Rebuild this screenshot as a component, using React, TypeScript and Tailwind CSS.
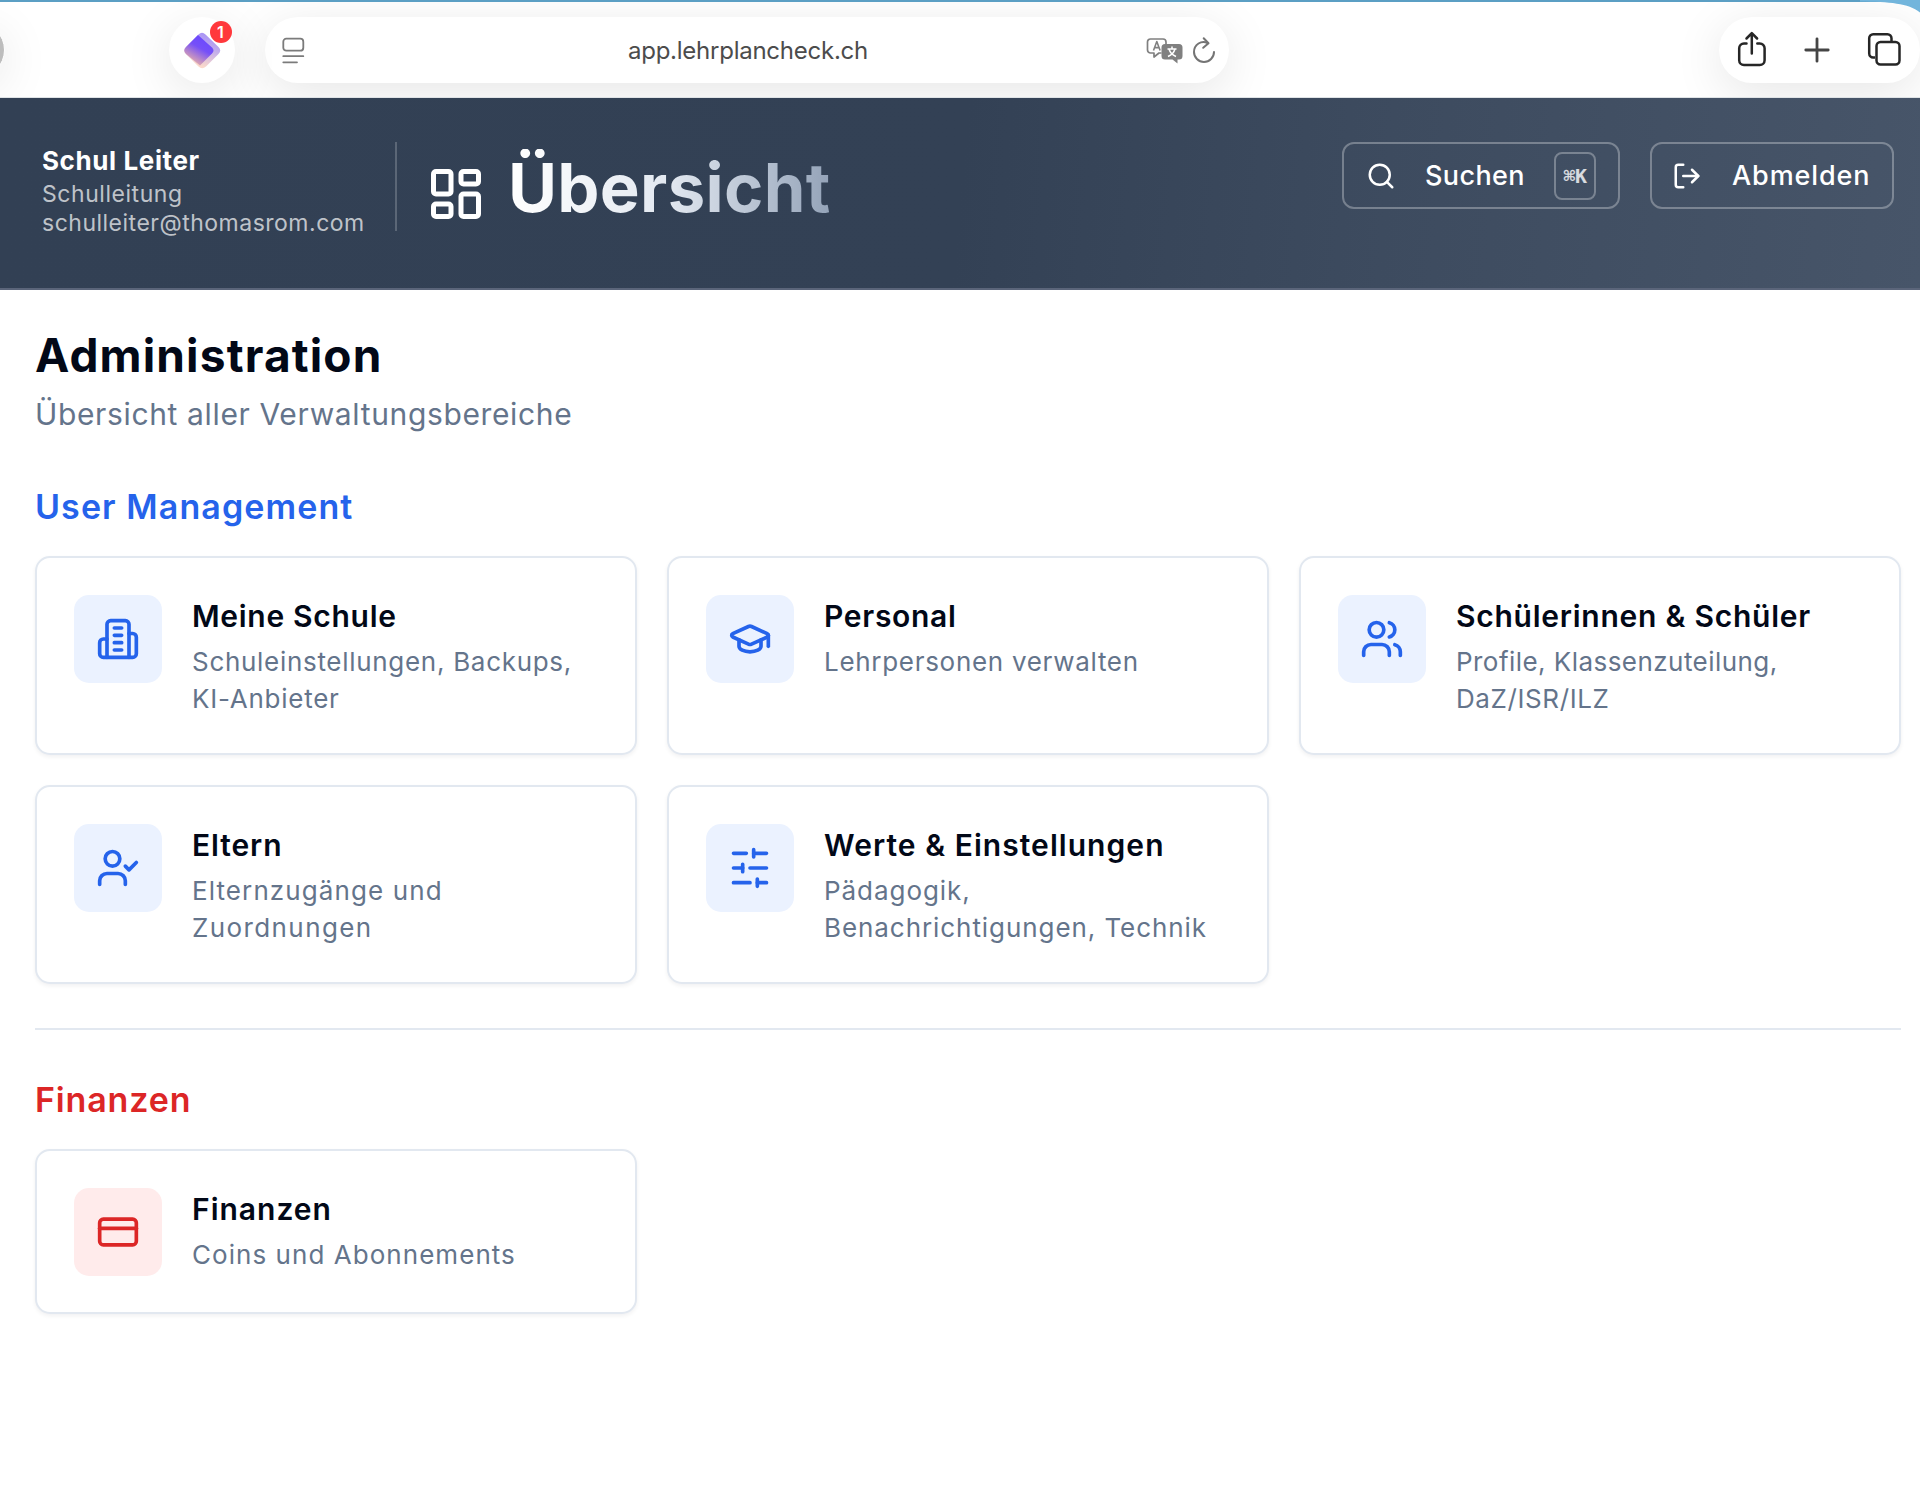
import type { ReactNode } from "react";
import { CreditCard, GraduationCap, LayoutDashboard, LogOut, Search, UserCheck, Users } from "lucide-react";

const iconProps = {
  width: 44,
  height: 44,
  viewBox: "0 0 24 24",
  fill: "none",
  stroke: "currentColor",
  strokeWidth: 2,
  strokeLinecap: "round" as const,
  strokeLinejoin: "round" as const,
};

function BuildingIcon() {
  return (
    <svg {...iconProps}>
      <path d="M6 22V4a2 2 0 0 1 2-2h8a2 2 0 0 1 2 2v18Z" />
      <path d="M6 12H4a2 2 0 0 0-2 2v6a2 2 0 0 0 2 2h2" />
      <path d="M18 9h2a2 2 0 0 1 2 2v9a2 2 0 0 1-2 2h-2" />
      <path d="M10 6h4M10 10h4M10 14h4M10 18h4" />
    </svg>
  );
}

function SlidersIcon() {
  return (
    <svg {...iconProps}>
      <path d="M21 4h-7M10 4H3M21 12h-9M8 12H3M21 20h-5M12 20H3" />
      <path d="M14 2v4M8 10v4M16 18v4" />
    </svg>
  );
}

type Tile = {
  title: string;
  titleClass: string;
  lines: { text: string; className: string }[];
  icon: ReactNode;
};

const userTiles: Tile[] = [
  {
    title: "Meine Schule",
    titleClass: "tracking-[0.7px]",
    lines: [
      { text: "Schuleinstellungen, Backups,", className: "tracking-[0.7px]" },
      { text: "KI-Anbieter", className: "tracking-[0.75px]" },
    ],
    icon: <BuildingIcon />,
  },
  {
    title: "Personal",
    titleClass: "tracking-[0.7px]",
    lines: [{ text: "Lehrpersonen verwalten", className: "tracking-[0.7px]" }],
    icon: <GraduationCap size={44} />,
  },
  {
    title: "Schülerinnen & Schüler",
    titleClass: "tracking-[0.75px]",
    lines: [
      { text: "Profile, Klassenzuteilung,", className: "tracking-[0.45px]" },
      { text: "DaZ/ISR/ILZ", className: "tracking-[0.6px]" },
    ],
    icon: <Users size={44} />,
  },
  {
    title: "Eltern",
    titleClass: "tracking-[0.9px]",
    lines: [
      { text: "Elternzugänge und", className: "tracking-[1.1px]" },
      { text: "Zuordnungen", className: "tracking-[1.4px]" },
    ],
    icon: <UserCheck size={44} />,
  },
  {
    title: "Werte & Einstellungen",
    titleClass: "tracking-[1.05px]",
    lines: [
      { text: "Pädagogik,", className: "tracking-[0.95px]" },
      { text: "Benachrichtigungen, Technik", className: "tracking-[0.93px]" },
    ],
    icon: <SlidersIcon />,
  },
];

const financeTiles: Tile[] = [
  {
    title: "Finanzen",
    titleClass: "tracking-[1px]",
    lines: [{ text: "Coins und Abonnements", className: "tracking-[1.05px]" }],
    icon: <CreditCard size={44} />,
  },
];

function TileCard({ tile, iconClass }: { tile: Tile; iconClass: string }) {
  return (
    <a className="flex items-start gap-[30px] rounded-[15px] border-2 border-[#e2e8f0] bg-white px-[37px] pt-[36.5px] pb-[36.5px] shadow-[0_2px_4px_rgba(15,23,42,0.06)]">
      <div className={`flex size-[88px] shrink-0 items-center justify-center rounded-[15px] ${iconClass}`}>{tile.icon}</div>
      <div className="pt-px whitespace-nowrap">
        <h3 className={`text-[30px] leading-[40px] font-semibold text-[#020817] ${tile.titleClass}`}>{tile.title}</h3>
        <div className="mt-[7px] text-[26px] leading-[37px] text-[#64748b]">
          {tile.lines.map((line) => (
            <p key={line.text} className={line.className}>{line.text}</p>
          ))}
        </div>
      </div>
    </a>
  );
}

const pill = "bg-white shadow-[0_10px_50px_rgba(0,0,0,0.1)]";

function BrowserBar() {
  return (
    <div className="relative h-[98px] border-t-2 border-b border-t-[#5b9fc4] border-b-[#dfe3e6] bg-white">
      <div className="flex h-[95px] items-start overflow-hidden pt-[14.5px]">
        <div className="mt-[5px] -ml-[51px] size-[56px] shrink-0 rounded-full border border-white bg-[#bdbdbd] shadow-[0_10px_50px_rgba(0,0,0,0.1)]" />
        <div className={`relative ml-[164px] size-[66px] shrink-0 rounded-full ${pill}`}>
          <svg width="66" height="66" viewBox="0 0 66 66">
            <defs>
              <linearGradient id="gemBack" x1="1" y1="0" x2="0.6" y2="1">
                <stop offset="0" stopColor="#9a86fb" />
                <stop offset="0.5" stopColor="#c3aeea" />
                <stop offset="1" stopColor="#fbd9cb" />
              </linearGradient>
              <linearGradient id="gemFront" x1="0.8" y1="0.1" x2="0.3" y2="1">
                <stop offset="0" stopColor="#6a48ff" />
                <stop offset="0.4" stopColor="#7650f8" />
                <stop offset="1" stopColor="#f3b9a2" />
              </linearGradient>
            </defs>
            <path d="M29.5 17.5Q33 14 36.5 17.5L49.5 30Q53 33.5 49.5 37L37 49.5Q33 53 29.5 49.5L17 37Q13.5 33.5 17 30Z" fill="url(#gemBack)" />
            <path d="M29 18L43 30.5Q46 33.5 43 36.5L31 48.5L17 37Q13.5 33.5 17 30Z" fill="url(#gemFront)" />
          </svg>
          <span className="absolute top-[4px] left-[40.5px] flex size-[22px] items-center justify-center rounded-full bg-[#ff383c] text-[16px] leading-none font-semibold text-white">1</span>
        </div>
        <div className={`ml-[30px] flex h-[66px] w-[964px] shrink-0 items-center rounded-full ${pill}`}>
          <svg className="ml-[16px] shrink-0" width="24" height="28" viewBox="0 0 24 28" fill="none" stroke="#7b7b7b" strokeWidth="1.8" strokeLinecap="round">
            <rect x="2.3" y="2.7" width="20" height="12" rx="3" />
            <path d="M2.3 20.2H22.3M2.3 26.3H16" />
          </svg>
          <span className="mt-[2px] ml-[323px] w-[243px] text-[24px] leading-[30px] tracking-[-0.25px] whitespace-nowrap text-[#4c4c4c]">app.lehrplancheck.ch</span>
          <svg className="mt-[2px] ml-[275px] shrink-0" width="37" height="28" viewBox="0 0 37 28" fill="none">
            <path d="M4.5 2h12.5a3 3 0 0 1 3 3v3.5M15.5 16H13l-5 4v-4H4.5a3 3 0 0 1-3-3V5a3 3 0 0 1 3-3" stroke="#808080" strokeWidth="1.7" strokeLinejoin="round" />
            <path d="M7.5 13.5l3.3-9 3.3 9M8.6 10.6h4.4" stroke="#808080" strokeWidth="1.6" strokeLinejoin="round" />
            <path d="M19 7h14a3.5 3.5 0 0 1 3.5 3.5v8.5a3.5 3.5 0 0 1-3.5 3.5h-1.500v4l-5-4H19a3.5 3.5 0 0 1-3.5-3.5v-8.5A3.5 3.5 0 0 1 19 7Z" fill="#808080" />
            <path d="M26 9.5v2.5M21.5 12h9M29 12c-1 3.5-3.5 6-7 7.5M23 12c1 3.5 3.5 6 7 7.5" stroke="#fff" strokeWidth="1.5" />
          </svg>
          <svg className="ml-[8px] shrink-0" width="26" height="30" viewBox="0 0 26 30" fill="none" stroke="#747474" strokeWidth="2" strokeLinecap="round" strokeLinejoin="round">
            <path d="M16.5 8C10.5 4.8 3 9.5 3 17A10 10 0 0 0 23 17" />
            <path d="M12.7 3.2L17.5 8.2L12.2 12.8" />
          </svg>
        </div>
        <div className={`ml-[490px] flex h-[66px] w-[201px] shrink-0 items-center rounded-full ${pill}`}>
          <svg className="ml-[17px] shrink-0" width="32" height="38" viewBox="0 0 32 38" fill="none" stroke="#262626" strokeWidth="2.5" strokeLinecap="round" strokeLinejoin="round">
            <path d="M10.5 12.5H8a4.8 4.8 0 0 0-4.8 4.8v12a4.8 4.8 0 0 0 4.8 4.8h15.8a4.8 4.8 0 0 0 4.8-4.8v-12a4.8 4.8 0 0 0-4.8-4.8h-2.5" />
            <path d="M15.8 22.5V2.5M10.5 7.5l5.3-5.3 5.3 5.3" />
          </svg>
          <svg className="ml-[36px] shrink-0" width="26" height="26" viewBox="0 0 26 26" stroke="#454545" strokeWidth="2.8" strokeLinecap="round">
            <path d="M13 1.8v22.4M1.8 13h22.4" />
          </svg>
          <svg className="ml-[36px] shrink-0" width="36" height="36" viewBox="0 0 36 36" fill="none" stroke="#262626" strokeWidth="2.5" strokeLinejoin="round">
            <path d="M9 25.5H7.2A4 4 0 0 1 3.2 21.5V6.2A4 4 0 0 1 7.2 2.2H21.5A4 4 0 0 1 25.5 6.2V9" />
            <rect x="10.5" y="10" width="23" height="22.5" rx="4" />
          </svg>
        </div>
      </div>
      <svg className="absolute -top-[2px] right-0" width="60" height="14" viewBox="0 0 60 14">
        <path d="M0 1.5C30 2 48 3 60 12.5V0H0Z" fill="#72b5dc" />
      </svg>
    </div>
  );
}

export default function App() {
  return (
    <div className="h-[1499px] w-[1920px] overflow-hidden bg-white font-['Inter','Liberation_Sans',sans-serif]">
      <BrowserBar />

      <header className="flex h-[192px] items-start justify-between border-b-2 border-[#5b657a] bg-[linear-gradient(95deg,#324054_0%,#334155_50%,#3d4b5f_72%,#475569_100%)] pt-[44px] pr-[26px] pl-[42px] whitespace-nowrap">
        <div className="flex items-start">
          <div className="w-[353px] pt-px">
            <p className="text-[26px] leading-[36px] font-bold tracking-[0.6px] text-white">Schul Leiter</p>
            <p className="text-[23px] leading-[30px] tracking-[0.55px] text-white/70">Schulleitung</p>
            <p className="text-[23px] leading-[29px] tracking-[0.5px] text-white/70">schulleiter@thomasrom.com</p>
          </div>
          <div className="h-[89px] w-[2px] bg-white/20" />
          <LayoutDashboard size={60} className="mt-[22px] ml-[29px] text-white" />
          <h1 className="mt-[7px] ml-[22px] bg-linear-to-r from-white via-[#e2e8f0] to-[#94a3b8] bg-clip-text pb-3 text-[67px] leading-[77px] font-bold tracking-[0.3px] text-transparent">Übersicht</h1>
        </div>
        <div className="flex gap-[30px] text-[27px] font-medium text-white">
          <button className="flex h-[67px] w-[278px] items-center rounded-[12px] border-2 border-white/30 pl-[22px]">
            <Search size={30} />
            <span className="mt-[2px] ml-[29px] w-[102px] text-left tracking-[0.4px]">Suchen</span>
            <kbd className="ml-[27px] flex h-[48px] w-[42px] items-center justify-center rounded-[8px] border-2 border-white/30 font-['DejaVu_Sans_Mono',monospace] text-[20px] font-bold tracking-[-0.5px] text-white/80">⌘K</kbd>
          </button>
          <button className="flex h-[67px] w-[244px] items-center rounded-[12px] border-2 border-white/30 pl-[20px]">
            <LogOut size={30} />
            <span className="mt-[2px] ml-[30px] tracking-[0.9px]">Abmelden</span>
          </button>
        </div>
      </header>

      <main className="pt-[39px] pr-[19px] pl-[35px]">
        <h2 className="text-[46px] leading-[53px] font-bold tracking-[1.15px] text-[#020817]">Administration</h2>
        <p className="mt-[10px] text-[30px] leading-[45px] tracking-[0.64px] text-[#64748b]">Übersicht aller Verwaltungsbereiche</p>

        <section className="mt-[48px]">
          <h2 className="text-[34px] leading-[44px] font-semibold tracking-[1.1px] text-[#2563eb]">User Management</h2>
          <div className="mt-[27px] grid grid-cols-3 gap-[30px]">
            {userTiles.map((tile) => (
              <TileCard key={tile.title} tile={tile} iconClass="bg-[#ebf2ff] text-[#2563eb]" />
            ))}
          </div>
        </section>

        <hr className="mt-[44px] border-t-2 border-[#e2e8f0]" />

        <section className="mt-[48px]">
          <h2 className="text-[34px] leading-[44px] font-semibold tracking-[0.85px] text-[#dc2626]">Finanzen</h2>
          <div className="mt-[27px] grid grid-cols-3 gap-[30px]">
            {financeTiles.map((tile) => (
              <TileCard key={tile.title} tile={tile} iconClass="bg-[#ffebeb] text-[#dc2626]" />
            ))}
          </div>
        </section>
      </main>
    </div>
  );
}
